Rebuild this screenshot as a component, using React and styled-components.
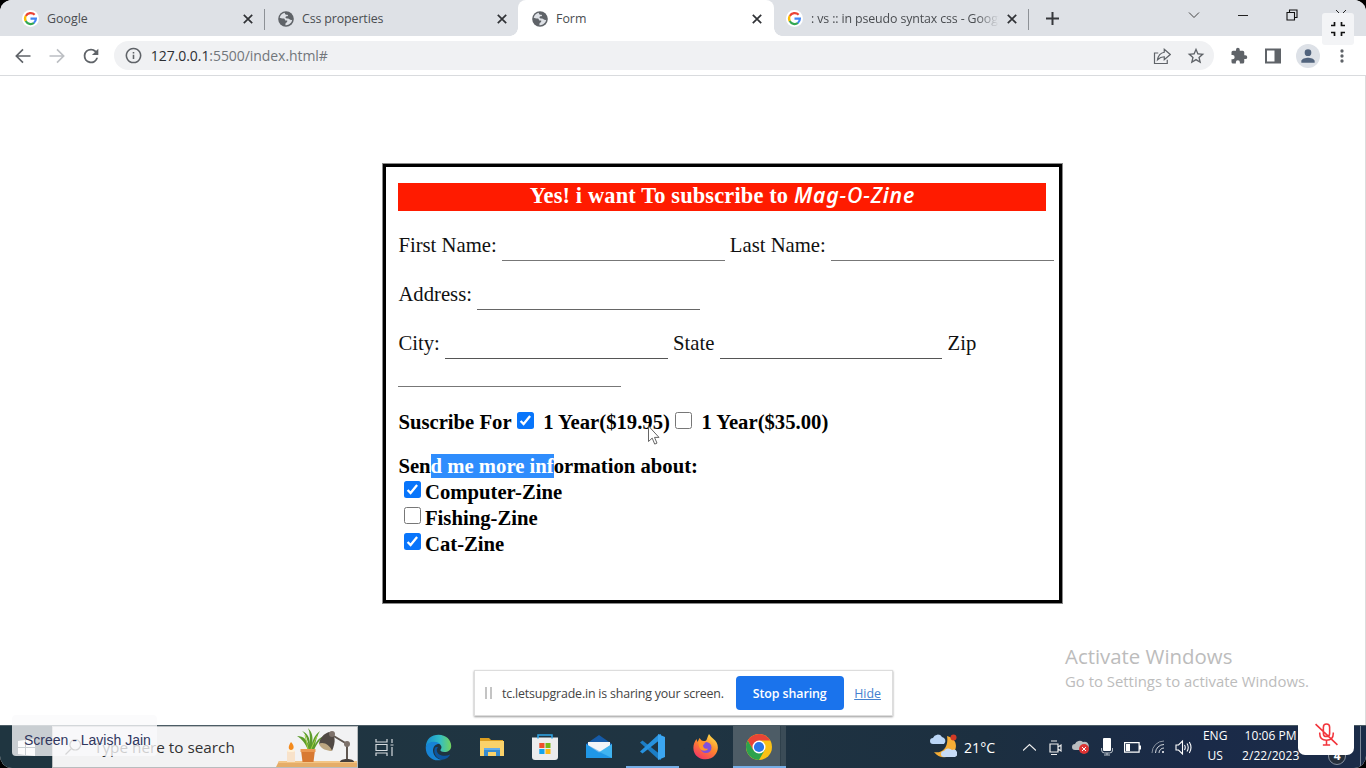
import React from 'react';
import styled, { createGlobalStyle } from 'styled-components';

const Global = createGlobalStyle`
  *{box-sizing:border-box}
  html,body{margin:0;background:#000;overflow:hidden}
  svg{display:block;flex:none}
`;
const ui = `'Open Sans','Noto Sans',sans-serif`;

const Screen = styled.div`
  position:relative;width:1366px;height:768px;display:flex;flex-direction:column;
  background:#fff;border-radius:12px;overflow:hidden;font-family:${ui};white-space:nowrap;
`;
const TabStrip = styled.div`
  height:36px;background:#dee1e6;display:flex;align-items:stretch;padding-left:8px;
`;
const Tab = styled.div`
  width:${p => p.$w || 255}px;display:flex;align-items:center;padding:1px ${p => p.$pr || 12}px 0 ${p => p.$pl || 13}px;gap:8px;
  font-size:12.4px;color:#4a4d51;position:relative;
  background:${p => (p.$active ? '#fff' : 'transparent')};
  border-radius:${p => (p.$active ? '8px 8px 0 0' : '0')};
  &::before,&::after{
    content:'';display:${p => (p.$active ? 'block' : 'none')};position:absolute;bottom:0;width:8px;height:8px;
  }
  &::before{left:-8px;background:radial-gradient(circle at 0 0,transparent 7.5px,#fff 8px)}
  &::after{right:-8px;background:radial-gradient(circle at 100% 0,transparent 7.5px,#fff 8px)}
`;
const TabTitle = styled.span`
  flex:1;overflow:hidden;letter-spacing:${p => p.$ls || 0}px;
  ${p => p.$fade && '-webkit-mask-image:linear-gradient(90deg,#000 88%,transparent);mask-image:linear-gradient(90deg,#000 88%,transparent);'}
`;
const TabLine = styled.div`width:1px;height:21px;background:#8d9196;align-self:center;margin-top:2px;`;
const NewTab = styled.div`width:46px;display:flex;align-items:center;justify-content:center;`;
const WindowButtons = styled.div`
  margin-left:auto;display:flex;margin-top:-6px;align-items:center;padding-right:1px;
  & > span{width:49px;display:flex;justify-content:center}
`;
const Toolbar = styled.div`
  height:40px;display:flex;align-items:center;border-bottom:1px solid #d9dbde;padding:0 7px 0 6px;
`;
const ToolButton = styled.div`width:34.3px;display:flex;justify-content:center;`;
const Omnibox = styled.div`
  width:1100px;height:29px;border-radius:15px;background:#f0f1f3;margin-left:6px;display:flex;align-items:center;
  padding:0 8px 0 11px;font-size:14px;color:#72767b;flex:none;
`;
const Url = styled.span`margin-left:9px;flex:1;letter-spacing:-.06px;b{font-weight:400;color:#2d2f33}`;
const UrlIcons = styled.div`display:flex;gap:15px;align-items:center;`;
const Extensions = styled.div`display:flex;margin-left:8px;align-items:center;`;
const Avatar = styled.div`
  width:24px;height:24px;border-radius:50%;background:#dde1e7;display:flex;align-items:center;justify-content:center;
`;
const Page = styled.main`height:649px;border-right:1px solid #dcdcdc;padding:88px 0 0 383px;`;
const Card = styled.section`
  width:679px;height:439px;border:3px solid #000;box-shadow:0 0 0 1px #8a8a8a;padding:16px 0 0 12.4px;
  font:20.7px/26px 'Liberation Serif','Times New Roman',serif;color:#111;
`;
const Heading = styled.h3`
  width:648px;height:28px;margin:0 0 21px;background:#ff1b00;color:#fff;text-align:center;
  font-size:22.4px;line-height:26px;letter-spacing:.15px;
`;
const Brand = styled.i`
  font-family:'Noto Sans',${ui};font-size:21.2px;font-weight:600;letter-spacing:.8px;line-height:24px;
  span{font-weight:500}
`;
const FieldRow = styled.div`
  display:flex;flex-wrap:wrap;align-content:flex-start;column-gap:5.3px;
  height:${p => p.$h || 49}px;
`;
const Blank = styled.span`width:222.6px;height:${p => p.$h || 29}px;border-bottom:1px solid ${p => p.$c || '#555'};`;
const ChoiceRow = styled.div`display:flex;font-weight:700;height:44px;color:#000;`;
const Question = styled.div`font-weight:700;height:26px;color:#000;`;
const Picked = styled.span`background:#2f8dfd;color:#fff;display:inline-block;height:24px;line-height:24px;vertical-align:top;margin-top:1px;`;
const ListRow = styled.div`display:flex;font-weight:700;color:#000;height:25.9px;padding-left:5.6px;gap:4px;`;
const Check = styled.span`
  width:17px;height:17px;border-radius:2.5px;flex:none;margin:${p => p.$m || '2px 0 0'};
  background:${p => (p.$on ? '#0875fb' : '#fff')};border:${p => (p.$on ? 'none' : '1.4px solid #777')};
`;
const Taskbar = styled.footer`
  height:43px;background:linear-gradient(90deg,#1f3540 0%,#1f3442 50%,#1c2f40 72%,#1a2a48 88%,#1b2c48);
  border-top:1px solid #4c5c65;display:flex;color:#fff;
`;
const Start = styled.div`width:52px;display:flex;align-items:center;justify-content:center;`;
const Search = styled.div`
  width:306px;background:#f2f2f3;border:1px solid #b9bcbe;display:flex;align-items:center;
  font-size:15.3px;color:#333;padding-left:11px;
  span{margin-left:12px;flex:1}
`;
const TaskButton = styled.div`
  width:53.5px;display:flex;align-items:center;justify-content:center;
  background:${p => (p.$active ? 'linear-gradient(90deg,#4d5c66 88%,#293b46 89%,#3b4c57 91%)' : 'none')};
  box-shadow:${p => (p.$open ? 'inset 0 -2px #76aee6' : 'none')};
`;
const Tray = styled.div`margin-left:auto;width:440px;display:flex;align-items:center;`;
const Weather = styled.div`width:91px;padding-left:4px;display:flex;align-items:center;gap:7px;font-size:14.2px;`;
const TrayIcon = styled.div`width:25.6px;display:flex;justify-content:center;`;
const TrayText = styled.div`
  width:${p => p.$w}px;font-size:12px;line-height:20px;text-align:center;letter-spacing:${p => p.$ls || 0}px;margin-top:-2px;
`;
const Notice = styled.div`
  width:18px;height:18px;border-radius:50%;background:#26303c;border:1px solid #8791a0;font-size:12px;font-weight:700;
  line-height:16px;text-align:center;margin:18px 0 0 21px;
`;
const ShowDesktop = styled.div`width:1px;height:100%;background:#7c8798;margin-left:auto;margin-right:5px;`;

const NameTag = styled.div`
  position:absolute;left:12px;top:715px;width:145px;height:41px;border-radius:4px;background:rgba(250,250,251,.78);
  font:14px/51px 'Liberation Sans',Arial,sans-serif;color:#30365e;padding-left:12px;
`;
const ExitFull = styled.div`
  position:absolute;left:1322px;top:13px;width:32px;height:32px;border-radius:3px;background:#f3f4f6;
  display:flex;align-items:center;justify-content:center;
`;
const Muted = styled.div`
  position:absolute;left:1298px;top:714px;width:56px;height:41px;border-radius:7px;background:#fff;
  display:flex;align-items:center;justify-content:center;
`;
const ShareBar = styled.div`
  position:absolute;left:474px;top:670px;width:419px;height:46px;background:#fff;border:1px solid #ddd;
  box-shadow:0 1px 2px #999;display:flex;align-items:center;font-size:12.4px;color:#444;padding-left:10px;
`;
const ShareText = styled.span`letter-spacing:-.18px;`;
const Grip = styled.span`width:7px;height:12px;border:solid #c4c4c4;border-width:0 2px;margin-right:10px;`;
const Stop = styled.button`
  width:108px;height:34px;margin:0 10px 0 auto;border:0;border-radius:4px;background:#1a73ec;color:#fff;
  font:600 12.4px ${ui};padding:0 1px 0 0;letter-spacing:-.08px;
`;
const Hide = styled.span`color:#4381cf;text-decoration:underline;margin-right:11px;`;
const Activation = styled.div`
  position:absolute;left:1065px;top:644px;color:#bcbcbc;font-size:20.4px;line-height:24px;
  small{display:block;font-size:14.9px;line-height:26px;}
`;
const Pointer = styled.svg`position:absolute;left:647px;top:425px;`;

const Line = ({ w = 20, d, c = '#5f6368', s = 1.8, vb, ...r }) => (
  <svg width={w} height={w} viewBox={vb || '0 0 24 24'} fill="none" stroke={c} strokeWidth={s} {...r}><path d={d} /></svg>
);
const Solid = ({ w = 20, d, c = '#5f6368' }) => <svg width={w} height={w} viewBox="0 0 24 24" fill={c}><path d={d} /></svg>;

const GoogleIcon = () => (
  <svg width="17" height="17" viewBox="0 0 34 34">
    <circle cx="17" cy="17" r="17" fill="#fff" />
    <g fill="none" strokeWidth="4.4">
      <path d="M25.3 9.6A11 11 0 0 0 7.6 12" stroke="#ea4335" />
      <path d="M7.6 11.4a11 11 0 0 0 0 11.2" stroke="#fbbc05" />
      <path d="M7.4 22.2a11 11 0 0 0 16.6 3.4" stroke="#34a853" />
      <path d="M23.6 26A11 11 0 0 0 27.8 17.2H17" stroke="#4285f4" />
    </g>
  </svg>
);
const Globe = () => (
  <svg width="16" height="16" viewBox="0 0 16 16">
    <circle cx="8" cy="8" r="7.8" fill="#5f6368" />
    <path d="M7 1.8C4.6 2.1 2.3 4 1.7 6.8c1.4.6 2.5.9 3.6.7 1.1 0 1.3.5 1.7 1.4.3.8 1.2.6 2 .7.6.2.3 1.4-.5 1.8-.8.3-1 .8-1 1.4l-.1 1.4C10.600 14.600 13.8 12.100 14.200 8.800c-1 .4-2 .1-2.700-.600-.7-.8-2.300-.5-3.400-.900-.9-.4-.8-1.700.2-2 .900-.200 1.500-.200 1.700-.900.1-.7-.7-.7-1.500-.6C7.300 3.900 6.500 2.800 7 1.800z" fill="#dee1e6" />
  </svg>
);
const Close = () => <Line w={10} vb="0 0 10 10" c="#303236" s={1.7} d="M.8.8l8.400 8.400M9.200.8L.8 9.200" />;
const Tick = ({ on, m }) => (
  <Check $on={on} $m={m}>
    {on && <Line w={17} vb="0 0 17 17" c="#fff" s={2.3} d="M3.600 9l3 3.100 6.500-8" />}
  </Check>
);

const Candle = () => (
  <svg width="82" height="40" viewBox="0 0 82 40">
    <path d="M4 34h78v6H1z" fill="#e5ad68" /><path d="M4 34h78v2H3z" fill="#f3c585" />
    <path d="M12 24h8v11h-8z" fill="#f8e2c9" /><ellipse cx="16" cy="24" rx="4" ry="1" fill="#fff2d8" />
    <path d="M16 15c4 4 3 8 0 8s-3-4 0-8z" fill="#f48a1c" />
    <path d="M33 23C30 16 27 12 22 9c7 0 10 4 12 10-2-7-3-12-7-15 6 2 8 8 8 13 0-6 0-12-2-16 5 5 5 10 4 17 1-7 4-11 8-14-3 5-4 9-5 14 2-5 5-8 10-9-6 4-8 8-11 14z" fill="#5c9c2b" />
    <path d="M33 22L30 8M36 22l6-13" stroke="#a5ce45" fill="none" />
    <path d="M26 23h14l-1.500 12h-11z" fill="#d87932" /><path d="M25.500 22h15v3h-15z" fill="#eb9750" />
    <path d="M57 8l15 9v17" fill="none" stroke="#5f5650" strokeWidth="2" />
    <path d="M54 5c7 2 7 10 3 19C54 19 49 16 44 17c1-7 5-10 10-12z" fill="#514944" />
    <path d="M44 17c4-3 11 1 13 7-5 0-11-2-13-7z" fill="#bda681" />
    <circle cx="57" cy="7" r="3" fill="#7d716a" /><circle cx="72" cy="17" r="3" fill="#7d716a" />
    <path d="M65 35c0-2 3-3 7-3s7 1 7 3z" fill="#453e3b" />
  </svg>
);
const Edge = () => (
  <svg width="27" height="27" viewBox="0 0 27 27">
    <defs><linearGradient id="eg"><stop stopColor="#168ed2" /><stop offset=".55" stopColor="#32bdc6" /><stop offset="1" stopColor="#72d35e" /></linearGradient></defs>
    <path d="M.8 13C1 5 6.500.8 13.600.8 21 .8 26.200 6 26.200 12c0 4-3.200 6-6.700 6-3.200 0-4.500-1-4-2.200 1-1.300 1.200-2.400.7-3.800C14.500 7.500 4 6.500.8 13z" fill="url(#eg)" />
    <path d="M.8 13C3 7 11 6.500 15 10c-4-.5-7 2.300-7 6.500 0 5 4.500 9.500 9.500 9.200C8 28.500.2 22 .8 13z" fill="#1784d5" />
    <path d="M9.800 14c-2 5.500 2 10.500 7 11.700 3.700 0 6.800-2.300 8.400-5.200-6 3-13 .5-13.400-3.800-.1-1.600.4-2.600 1.200-3.400-1.500-.5-2.700-.3-3.200.7z" fill="#0c559f" />
  </svg>
);
const Folder = () => (
  <svg width="24" height="20" viewBox="0 0 24 20">
    <path d="M0 1h9l2 2h12v5H0z" fill="#dc9e20" /><path d="M0 4h24v15H0z" fill="#fad26a" />
    <path d="M4 19v-8h16v8h-4v-4H8v4z" fill="#388bcf" /><path d="M4 11h16v2H4z" fill="#64adea" />
  </svg>
);
const Store = () => (
  <svg width="26" height="26" viewBox="0 0 26 26">
    <path d="M0 3.500h26V23a3 3 0 0 1-3 3H3a3 3 0 0 1-3-3z" fill="#ececed" />
    <path d="M6 4.500V1h14v3.500" fill="none" stroke="#31a6e7" strokeWidth="1.500" />
    <path d="M7.300 9H12.500v5H7.300z" fill="#ef4f2a" /><path d="M13.500 9h5v5h-5z" fill="#78b718" /><path d="M7.300 15H12.500v5H7.300z" fill="#12a3ed" /><path d="M13.500 15h5v5h-5z" fill="#fcb713" />
  </svg>
);
const Mail = () => (
  <svg width="26" height="24" viewBox="0 0 26 24">
    <path d="M0 9L13 0l13 9v5H0z" fill="#155ba9" /><path d="M2 7h22v11H2z" fill="#f1f4f8" />
    <path d="M0 9l13 8.500L26 9v14H0z" fill="#2ba6ee" /><path d="M0 23V9l26 14z" fill="#1688dd" opacity=".5" /><path d="M13 17l13-8v14z" fill="#55c2f3" opacity=".5" />
  </svg>
);
const Code = () => (
  <svg width="27" height="26" viewBox="0 0 27 26">
    <path d="M1 8.500L3.500 6.500 22 21v5L19 25z" fill="#1c7dc5" /><path d="M1 17.500l2.500 2L22 5V0l-3 1z" fill="#2792df" />
    <path d="M19 0l7 3v20l-7 3z" fill="#3ba6f1" />
  </svg>
);
const Firefox = () => (
  <svg width="26" height="26" viewBox="0 0 26 26">
    <defs><linearGradient id="fg" x1=".8" y1="0" x2=".2" y2="1"><stop stopColor="#ffe34d" /><stop offset=".45" stopColor="#ff8a2b" /><stop offset="1" stopColor="#f53068" /></linearGradient></defs>
    <path d="M16 0c1.500 2 2.500 3.500 4.500 5 5 3.500 6 11 1.500 16-5 6.500-17 5.500-20.500-2C-.7 14.500.5 9 3.500 5l1 3L6.500 4 9 7h3c2 0 2-3.500 4-7z" fill="url(#fg)" />
    <circle cx="13" cy="13.500" r="5.500" fill="#8051dc" />
    <path d="M5 7.500c3-1 6-1 8 1-2 0-1 2-3 2.500 0 3 2 4.500 5 3.500-1 3.500-8 3-9-2z" fill="#ff952b" />
  </svg>
);
const Chrome = () => (
  <svg width="26" height="26" viewBox="0 0 26 26">
    <circle cx="13" cy="13" r="13" fill="#fbc116" />
    <path d="M13 6.500H24.250A13 13 0 0 0 1.750 6.500L7.400 16.200 13 13z" fill="#e84435" />
    <path d="M1.750 6.500l5.600 9.700h11.250L13 26A13 13 0 0 1 1.750 6.500z" fill="#2ca24d" />
    <circle cx="13" cy="13" r="6.500" fill="#fff" /><circle cx="13" cy="13" r="5.100" fill="#2b76e8" />
  </svg>
);
const WeatherIcon = () => (
  <svg width="27" height="26" viewBox="0 0 27 26">
    <path d="M17 2c9 2 11 10 7 16-5 7-15 7-20 0 8 2 15-5 13-16z" fill="#f5ad35" />
    <circle cx="23.500" cy="3.500" r="3" fill="#d33a25" />
    <path d="M3 10a3 3 0 0 1 0-6 5 5 0 0 1 9-1 4 4 0 0 1 2 7z" fill="#bad6f7" />
    <path d="M14 23a3 3 0 0 1 0-6 5 5 0 0 1 8-1 3.500 3.500 0 0 1 3 7z" fill="#c7dcf7" />
  </svg>
);

export default function App() {
  return (
    <Screen>
      <Global />
      <TabStrip>
        <Tab $w={256} $pl={14} $pr={11.5}><GoogleIcon /><TabTitle>Google</TabTitle><Close /></Tab>
        <TabLine />
        <Tab $w={253} $pr={11}><Globe /><TabTitle $ls={-.12}>Css properties</TabTitle><Close /></Tab>
        <Tab $w={256} $active $pl={14}><Globe /><TabTitle>Form</TabTitle><Close /></Tab>
        <Tab $w={254} $pl={12} $pr={11}><GoogleIcon /><TabTitle $fade $ls={-.13}>: vs :: in pseudo syntax css - Google</TabTitle><Close /></Tab>
        <TabLine />
        <NewTab><Line w={13} vb="0 0 13 13" c="#36383c" s={2} d="M6.500 0v13M0 6.500h13" /></NewTab>
        <WindowButtons>
          <span><Line w={12} vb="0 0 12 12" c="#444" s={1} d="M1 3.500l5 5 5-5" /></span>
          <span><Line w={12} vb="0 0 12 12" c="#222" s={1} d="M1 6.500h10" /></span>
          <span><Line w={12} vb="0 0 12 12" c="#111" s={1.1} d="M1 3.500h7.500V11H1zM3.500 3V1H11v7.500H8.800" /></span>
          <span><Line w={12} vb="0 0 12 12" c="#222" s={1} d="M1 1l10 10M11 1L1 11" /></span>
        </WindowButtons>
      </TabStrip>
      <Toolbar>
        <ToolButton><Line d="M21 12H4M12 4l-8 8 8 8" s={2} /></ToolButton>
        <ToolButton><Line c="#bcbfc3" d="M3 12h17M12 4l8 8-8 8" s={2} /></ToolButton>
        <ToolButton><Solid w={22} d="M17.650 6.350A7.950 7.950 0 0 0 12 4a8 8 0 1 0 7.730 10h-2.080A6 6 0 1 1 12 6c1.660 0 3.140.69 4.220 1.780L13 11h7V4z" /></ToolButton>
        <Omnibox>
          <Line w={17} d="M12 2a10 10 0 1 0 .01 0zM12 11v6M12 7v2" s={2.2} />
          <Url><b>127.0.0.1</b>:5500/index.html#</Url>
          <UrlIcons>
            <Line w={18} s={1.6} d="M7 8H2v14h17v-5M15 3l8 7-8 7v-4c-4 0-6 1-9 4 1-6 4-9 9-10z" />
            <Solid w={20} d="M22 9.240l-7.190-.62L12 2 9.190 8.630 2 9.240l5.460 4.730L5.820 21 12 17.270 18.180 21l-1.630-7.030zM12 15.400l-3.760 2.270 1-4.280-3.320-2.880 4.380-.38L12 6.100l1.710 4.040 4.380.38-3.320 2.880 1 4.280z" />
          </UrlIcons>
        </Omnibox>
        <Extensions>
          <ToolButton><Solid w={18} d="M20.500 11H19V7a2 2 0 0 0-2-2h-4V3.500a2.500 2.500 0 0 0-5 0V5H4a2 2 0 0 0-2 2v3.800h1.500a2.700 2.700 0 0 1 0 5.400H2V20a2 2 0 0 0 2 2h3.800v-1.500a2.700 2.700 0 0 1 5.400 0V22H17a2 2 0 0 0 2-2v-4h1.500a2.500 2.500 0 0 0 0-5z" /></ToolButton>
          <ToolButton><svg width="16" height="16"><path d="M1 1.500h14v13H1z" fill="none" stroke="#5f6368" strokeWidth="2" /><path d="M9.500 1H16v14H9.500z" fill="#5f6368" /></svg></ToolButton>
          <ToolButton><Avatar><Solid w={20} c="#52647d" d="M12 12a4 4 0 1 0 0-8 4 4 0 0 0 0 8zm0 2c-2.700 0-8 1.340-8 4v2h16v-2c0-2.660-5.300-4-8-4z" /></Avatar></ToolButton>
          <ToolButton><Solid w={20} d="M12 8a2 2 0 1 0 0-4 2 2 0 0 0 0 4zm0 2a2 2 0 1 0 0 4 2 2 0 0 0 0-4zm0 6a2 2 0 1 0 0 4 2 2 0 0 0 0-4z" /></ToolButton>
        </Extensions>
      </Toolbar>

      <Page>
        <Card>
          <Heading>Yes! i want To subscribe to <Brand>Mag<span>-O-Z</span>ine</Brand></Heading>
          <FieldRow>First Name: <Blank $c="#777" />Last Name: <Blank $c="#777" /></FieldRow>
          <FieldRow>Address: <Blank $c="#666" /></FieldRow>
          <FieldRow $h={79}>City: <Blank />State <Blank />Zip <Blank $h={28} $c="#777" /></FieldRow>
          <ChoiceRow>
            Suscribe For<Tick on m="3px 9.4px 0 5.2px" />1 Year($19.95)<Tick m="3px 9.4px 0 5.2px" />1 Year($35.00)
          </ChoiceRow>
          <Question>Sen<Picked>d me more inf</Picked>ormation about:</Question>
          <ListRow><Tick on />Computer-Zine</ListRow>
          <ListRow><Tick m="2px 0 0" />Fishing-Zine</ListRow>
          <ListRow><Tick on />Cat-Zine</ListRow>
        </Card>
      </Page>

      <Taskbar>
        <Start><svg width="17" height="17" fill="#fff"><path d="M0 2l7-1v7H0zM8 1l9-1v8H8zM0 9h7v7l-7-1zM8 9h9v8l-9-1z" /></svg></Start>
        <Search>
          <Line w={18} c="#555" s={1.6} d="M15 2a7 7 0 1 1-.01 0zM10 14l-8 8" />
          <span>Type here to search</span><Candle />
        </Search>
        <TaskButton><Line w={19} vb="0 0 19 19" c="#d5dade" s={1.2} d="M1 1v3h11V1M1 6.500h11v6H1zM1 18v-3h11v3M17 1v4M17 9v9M15.500 7h3" /></TaskButton>
        <TaskButton><Edge /></TaskButton>
        <TaskButton><Folder /></TaskButton>
        <TaskButton><Store /></TaskButton>
        <TaskButton><Mail /></TaskButton>
        <TaskButton $open><Code /></TaskButton>
        <TaskButton><Firefox /></TaskButton>
        <TaskButton $open $active><Chrome /></TaskButton>
        <Tray>
          <Weather><WeatherIcon />21°C</Weather>
          <TrayIcon><Line w={13} vb="0 0 13 13" c="#eee" s={1.2} d="M0 9.500l6.500-6 6.500 6" /></TrayIcon>
          <TrayIcon><Line w={15} vb="0 0 15 15" c="#eee" s={1.2} d="M2 4h8v8H2zM10 7l3-2v6l-3-2M3 1h6M3 14.500h6" /></TrayIcon>
          <TrayIcon><svg width="17" height="14"><path d="M3 10a3 3 0 0 1 0-6 5 5 0 0 1 8-2 4 4 0 0 1 3 8z" fill="#b9bdc0" /><circle cx="12" cy="9" r="5" fill="#dc3434" /><path d="M10 7l4 4m0-4l-4 4" stroke="#fff" /></svg></TrayIcon>
          <TrayIcon><svg width="12" height="18"><rect x="2" width="8" height="13" rx="1" fill="#fff" /><path d="M.6 10v2q0 3 3 3h5q3 0 3-3v-2M6 15v2M3 17h6" fill="none" stroke="#bdc4cc" /></svg></TrayIcon>
          <TrayIcon><svg width="17" height="11"><path d="M.6.6h14.500v9.600H.6z" fill="none" stroke="#fff" strokeWidth="1.200" /><path d="M2 2h4v7H2zM15 3.500h2v4h-2z" fill="#fff" /></svg></TrayIcon>
          <TrayIcon><svg width="14" height="14" fill="none" stroke="#8993a0"><path d="M1 13A12 12 0 0 1 13 1" /><path d="M4.500 13A8.500 8.500 0 0 1 13 4.500M8 13a5 5 0 0 1 5-5" stroke="#d5dae0" /><circle cx="12" cy="12" r="1" fill="#fff" stroke="none" /></svg></TrayIcon>
          <TrayIcon><Line w={17} vb="0 0 17 17" c="#fff" s={1.1} d="M1 6h2.500l4-4v13l-4-4H1zM9.500 6q1.500 2.500 0 5M12 4.500q2.500 4 0 8M14.300 3q3.400 5.500 0 11" /></TrayIcon>
          <TrayText $w={38}>ENG<br />US</TrayText>
          <TrayText $w={73} $ls={.05}>10:06 PM<br />2/22/2023</TrayText>
          <Notice>4</Notice>
          <ShowDesktop />
        </Tray>
      </Taskbar>

      <Pointer width="13" height="20" viewBox="0 0 13 20"><path d="M1.500 1v15.500l3.700-3.400 2.500 6 2.300-1-2.500-5.700H12z" fill="#fff" stroke="#555" strokeWidth=".9" /></Pointer>
      <Activation>Activate Windows<small>Go to Settings to activate Windows.</small></Activation>
      <ShareBar>
        <Grip /><ShareText>tc.letsupgrade.in is sharing your screen.</ShareText><Stop>Stop sharing</Stop><Hide>Hide</Hide>
      </ShareBar>
      <NameTag>Screen - Lavish Jain</NameTag>
      <ExitFull><Line w={16} vb="0 0 16 16" c="#111" s={1.7} d="M1 4.500h3.500V1M11.500 1v3.500H15M1 11.500h3.500V15M15 11.500h-3.500V15" /></ExitFull>
      <Muted><Line w={25} c="#f2353c" s={1.5} d="M9 9V5q0-3 3-3t3 3v6q0 3-3 3t-3-3V9M5.500 10v1q0 6.500 6.500 6.500t6.500-6.500v-1M12 17.500V22M8.500 22h7M1.500 2l21 20" /></Muted>
    </Screen>
  );
}
